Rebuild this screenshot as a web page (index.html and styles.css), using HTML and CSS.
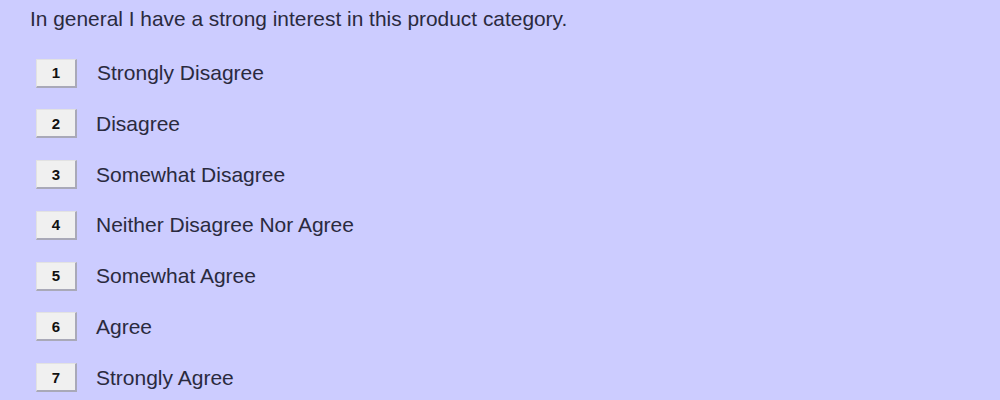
FILE: index.html
```html
<!DOCTYPE html>
<html lang="en">
<head>
    <meta charset="UTF-8">
    <title>Survey question</title>
    <link rel="stylesheet" href="styles.css">
</head>
<body>
    <div class="question">
        <p class="question-text">In general I have a strong interest in this product category.</p>
        <ul class="answers">
            <li class="answer"><button class="answer-key">1</button><span class="answer-label first">Strongly Disagree</span></li>
            <li class="answer"><button class="answer-key">2</button><span class="answer-label">Disagree</span></li>
            <li class="answer"><button class="answer-key">3</button><span class="answer-label">Somewhat Disagree</span></li>
            <li class="answer"><button class="answer-key">4</button><span class="answer-label">Neither Disagree Nor Agree</span></li>
            <li class="answer"><button class="answer-key">5</button><span class="answer-label">Somewhat Agree</span></li>
            <li class="answer"><button class="answer-key">6</button><span class="answer-label">Agree</span></li>
            <li class="answer"><button class="answer-key">7</button><span class="answer-label">Strongly Agree</span></li>
        </ul>
    </div>
</body>
</html>
```

FILE: styles.css
```css
body {
    margin: 0;
    background-color: #ccccff;
    color: #2a2a3e;
    font-family: "Liberation Sans", Arial, sans-serif;
}

.question {
    padding: 6px 0 0 30px;
}

.question-text {
    margin: 0;
    font-size: 20.9px;
    line-height: 26px;
}

.answers {
    list-style: none;
    margin: 0;
    padding: 27px 0 0 6px;
    display: flex;
    flex-direction: column;
    gap: 22.8px;
}

.answer {
    display: flex;
    align-items: center;
    height: 28px;
}

.answer-key {
    box-sizing: border-box;
    width: 41px;
    height: 29px;
    margin: 0;
    padding: 0;
    background: #f0f0f0;
    border: 1px solid #e2e2e2;
    border-right: 2px solid #a9a9b8;
    border-bottom: 2px solid #a9a9b8;
    border-radius: 0;
    font-family: "Liberation Sans", Arial, sans-serif;
    font-size: 15px;
    font-weight: bold;
    color: #111;
}

.answer-label {
    margin-left: 19px;
    font-size: 21px;
}

.answer-label.first {
    margin-left: 20px;
}
```
